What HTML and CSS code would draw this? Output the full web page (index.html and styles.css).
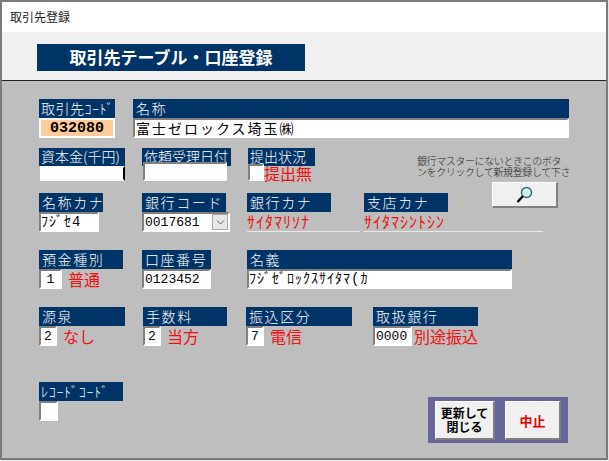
FILE: index.html
```html
<!DOCTYPE html>
<html>
<head>
    <meta charset="utf-8" />
    <title>取引先登録</title>
    <link rel="stylesheet" href="styles.css">
</head>
<body>
<div class="win">
    <div class="titlebar">取引先登録</div>
    <div class="header">
        <div class="head-title">取引先テーブル・口座登録</div>
    </div>
    <div class="form">
        <div class="row row1">
            <div class="f w76">
                <div class="lab tight code-lab">取引先ｺｰﾄﾞ</div>
                <div class="box code">032080</div>
            </div>
            <div class="f w436">
                <div class="lab">名称</div>
                <div class="box name">富士ゼロックス埼玉㈱</div>
            </div>
        </div>
        <div class="mid">
            <div class="mid-rows">
                <div class="row row2">
                    <div class="f w86">
                        <div class="lab tight h18">資本金(千円)</div>
                        <div class="box nosink w85 h15"></div>
                    </div>
                    <div class="f w89">
                        <div class="lab tight h18">依頼受理日付</div>
                        <div class="box w84 h19 up4"></div>
                    </div>
                    <div class="f w67">
                        <div class="lab tight h18">提出状況</div>
                        <div class="inline up2">
                            <div class="box w16 h17"></div>
                            <span class="red">提出無</span>
                        </div>
                    </div>
                </div>
                <div class="row row3">
                    <div class="f w64">
                        <div class="lab">名称カナ</div>
                        <div class="box w60 hw">ﾌｼﾞｾ4</div>
                    </div>
                    <div class="f w84">
                        <div class="lab">銀行コード</div>
                        <div class="box w88 small combo">
                            <span>0017681</span>
                            <span class="arrow">
                                <svg width="9" height="5" viewBox="0 0 9 5"><path d="M1 0.5L4.5 4L8 0.5" fill="none" stroke="#606060" stroke-width="1"/></svg>
                            </span>
                        </div>
                    </div>
                    <div class="f w113 ml21">
                        <div class="lab w84">銀行カナ</div>
                        <div class="kana">ｻｲﾀﾏﾘｿﾅ</div>
                    </div>
                    <div class="f w179 ml4">
                        <div class="lab w84">支店カナ</div>
                        <div class="kana">ｻｲﾀﾏｼﾝﾄｼﾝ</div>
                    </div>
                </div>
            </div>
            <div class="note">
                <p>銀行マスターにないときこのボタ<br>ンをクリックして新規登録して下さ</p>
                <div class="btn search">
                    <svg width="18" height="18" viewBox="0 0 18 18">
                        <circle cx="10.5" cy="6.5" r="5" fill="#d8f2f2" stroke="#2c6a6a" stroke-width="1.4"/>
                        <path d="M7 10L1.5 16" stroke="#000" stroke-width="2.4"/>
                    </svg>
                </div>
            </div>
        </div>
        <div class="row row4">
            <div class="f w84">
                <div class="lab">預金種別</div>
                <div class="inline">
                    <div class="box w23 center">1</div>
                    <span class="red">普通</span>
                </div>
            </div>
            <div class="f w69">
                <div class="lab">口座番号</div>
                <div class="box small">0123452</div>
            </div>
            <div class="f w265 ml36">
                <div class="lab">名義</div>
                <div class="box hw">ﾌｼﾞｾﾞﾛｯｸｽｻｲﾀﾏ(ｶ</div>
            </div>
        </div>
        <div class="row row5">
            <div class="f w86">
                <div class="lab">源泉</div>
                <div class="inline">
                    <div class="box w18 center">2</div>
                    <span class="red">なし</span>
                </div>
            </div>
            <div class="f w84">
                <div class="lab">手数料</div>
                <div class="inline">
                    <div class="box w18 center">2</div>
                    <span class="red">当方</span>
                </div>
            </div>
            <div class="f w106 ml19">
                <div class="lab">振込区分</div>
                <div class="inline">
                    <div class="box w18 center">7</div>
                    <span class="red">電信</span>
                </div>
            </div>
            <div class="f w105 ml21">
                <div class="lab">取扱銀行</div>
                <div class="inline">
                    <div class="box w40 small">0000</div>
                    <span class="red tightred">別途振込</span>
                </div>
            </div>
        </div>
        <div class="row row6">
            <div class="f w84">
                <div class="lab tight hw-lab">ﾚｺｰﾄﾞｺｰﾄﾞ</div>
                <div class="box w19"></div>
            </div>
            <div class="btn-panel">
                <div class="btn save">更新して<br>閉じる</div>
                <div class="btn stop">中止</div>
            </div>
        </div>
    </div>
</div>
</body>
</html>
```

FILE: styles.css
```css
body{
    margin: 0px;
    background: #e6e6e6;
    font-family: "Noto Sans CJK JP", "Liberation Sans", sans-serif;
}
.win{
    width: 608px;
    height: 460px;
    border: 2px solid #7a7a7a;
    box-sizing: border-box;
    display: flex;
    flex-direction: column;
    background: #bebebe;
    overflow: hidden;
}
.titlebar{
    height: 30px;
    background: #fff;
    font-size: 12px;
    line-height: 30px;
    padding-left: 8px;
    color: #222;
}
.header{
    height: 49px;
    background: #f0f0f0;
    border-bottom: 1px solid #222;
    padding: 12px 0px 0px 35px;
    box-sizing: border-box;
}
.head-title{
    width: 268px;
    height: 27px;
    line-height: 26px;
    background: #003366;
    color: #fff;
    font-size: 17px;
    font-weight: bold;
    text-align: center;
}
.form{
    flex: 1;
    padding: 18px 0px 0px 37px;
}
.row{
    display: flex;
}
.row1{
    gap: 18px;
}
.row2{
    margin-top: 10px;
    height: 33px;
    gap: 17px;
}
.row3{
    margin-top: 12px;
    gap: 39px;
}
.row3 .ml21{
    margin-left: -18px;
}
.row3 .ml4{
    margin-left: -35px;
}
.row4{
    margin-top: 18px;
    gap: 19px;
}
.row4 .ml36{
    margin-left: 17px;
}
.row5{
    margin-top: 18px;
    gap: 18px;
}
.row5 .ml19{
    margin-left: 1px;
}
.row5 .ml21{
    margin-left: 3px;
}
.row6{
    margin-top: 36px;
    justify-content: space-between;
    width: 529px;
    align-items: flex-start;
}
.mid{
    display: grid;
}
.mid-rows, .note{
    grid-area: 1 / 1;
}
.note{
    justify-self: start;
    margin: 17px 0px 0px 378px;
    width: 156px;
    height: 52px;
}
.note p{
    margin: 0px;
    font-size: 10px;
    font-weight: 300;
    letter-spacing: -0.4px;
    line-height: 11px;
    color: #222;
    white-space: nowrap;
}
.lab{
    height: 19px;
    line-height: 19px;
    background: #003366;
    color: #fff;
    font-size: 14px;
    font-weight: 300;
    padding-left: 3px;
    letter-spacing: 1.6px;
    white-space: nowrap;
    box-sizing: border-box;
}
.lab.tight{
    letter-spacing: 0px;
    padding-left: 2px;
}
.lab.code-lab{
    letter-spacing: 0.5px;
}
.lab.hw-lab{
    letter-spacing: 0.7px;
}
.h18{
    height: 18px;
    line-height: 17px;
}
.box{
    height: 20px;
    line-height: 17px;
    box-sizing: border-box;
    background: #fff;
    border: 2px solid #fff;
    border-top-color: #808080;
    border-left-color: #808080;
    font-family: "Liberation Mono", "Noto Sans CJK JP", monospace;
    font-size: 13px;
    color: #000;
    white-space: nowrap;
}
.small{
    padding-left: 1px;
}
.hw{
    font-size: 14px;
    letter-spacing: 1px;
}
.center{
    text-align: center;
}
.code{
    background: #ffcc99;
    border-color: #fff;
    font-weight: bold;
    font-size: 15px;
    text-align: center;
}
.name{
    font-size: 14px;
    letter-spacing: 2px;
    padding-left: 1px;
    font-family: "Noto Sans CJK JP", sans-serif;
}
.nosink{
    border-color: #fff;
    border-right-color: #000;
    margin-left: 1px;
}
.h15{ height: 15px; }
.h17{ height: 17px; }
.h19{ height: 19px; }
.up4{ margin: -4px 0px 0px 1px; position: relative; }
.up2{ margin-top: -3px; align-items: flex-start; }
.inline{
    display: flex;
    align-items: center;
}
.red{
    color: #ee1111;
    font-size: 16px;
    line-height: 20px;
    margin-left: 6px;
    white-space: nowrap;
}
.up2 .red{
    margin: 2px 0px 0px 0px;
    line-height: 17px;
}
.tightred{
    margin-left: 2px;
}
.kana{
    height: 19px;
    line-height: 18px;
    border-bottom: 1px solid #e8e8e8;
    color: #ee1111;
    font-size: 16px;
    letter-spacing: 1px;
    white-space: nowrap;
    box-sizing: content-box;
}
.combo{
    display: flex;
    justify-content: space-between;
    align-items: center;
}
.arrow{
    width: 16px;
    height: 16px;
    background: #e8e8e8;
    border: 1px solid #a8a8a8;
    box-sizing: border-box;
    display: flex;
    align-items: center;
    justify-content: center;
}
.btn{
    background: #f0f0f0;
    border: 1px solid #fff;
    border-right: 2px solid #808080;
    border-bottom: 2px solid #808080;
    box-sizing: border-box;
    display: flex;
    align-items: center;
    justify-content: center;
    text-align: center;
}
.search{
    width: 66px;
    height: 26px;
    margin: 5px 0px 0px 75px;
}
.btn-panel{
    display: flex;
    gap: 10px;
    margin-top: 15px;
    padding: 4px 7px 3px;
    background: #666699;
}
.save{
    width: 60px;
    height: 39px;
    font-size: 12px;
    line-height: 14px;
    font-weight: bold;
}
.stop{
    width: 56px;
    height: 39px;
    font-size: 13px;
    font-weight: bold;
    color: #e00000;
}
.w16{ width: 16px; }
.w18{ width: 18px; }
.w19{ width: 19px; }
.w23{ width: 23px; }
.w40{ width: 40px; }
.w60{ width: 60px; }
.w64{ width: 64px; }
.w67{ width: 67px; }
.w69{ width: 69px; }
.w76{ width: 76px; }
.w84{ width: 84px; }
.w85{ width: 85px; }
.w86{ width: 86px; }
.w88{ width: 88px; }
.w89{ width: 89px; }
.w105{ width: 105px; }
.w106{ width: 106px; }
.w113{ width: 113px; }
.w179{ width: 179px; }
.w265{ width: 265px; }
.w436{ width: 436px; }
```
